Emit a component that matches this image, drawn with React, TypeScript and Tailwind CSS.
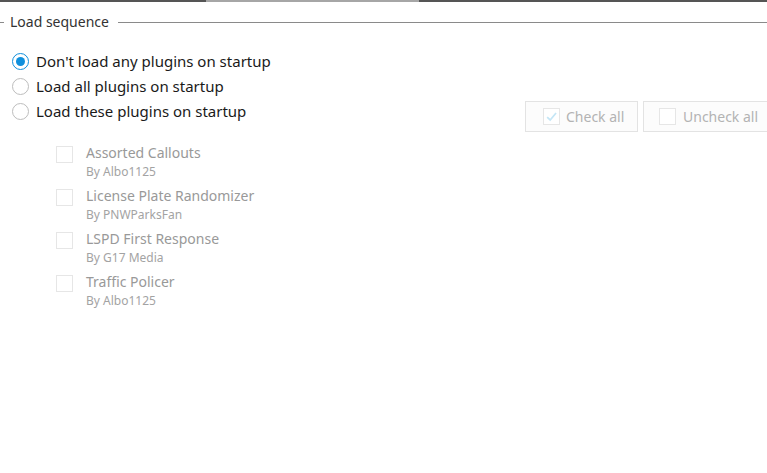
const plugins = [
  { name: 'Assorted Callouts', author: 'Albo1125' },
  { name: 'License Plate Randomizer', author: 'PNWParksFan' },
  { name: 'LSPD First Response', author: 'G17 Media' },
  { name: 'Traffic Policer', author: 'Albo1125' },
]

const options = [
  "Don't load any plugins on startup",
  'Load all plugins on startup',
  'Load these plugins on startup',
]

function Radio({ checked }: { checked: boolean }) {
  return (
    <span
      className={
        'flex h-[17px] w-[17px] shrink-0 items-center justify-center rounded-full border ' +
        (checked ? 'border-[#0f8fdc]' : 'border-[#bdbdbd]')
      }
    >
      {checked && <span className="h-[9px] w-[9px] rounded-full bg-[#0f8fdc]" />}
    </span>
  )
}

function Box({ checked }: { checked?: boolean }) {
  return (
    <span className="flex h-[17px] w-[17px] shrink-0 items-center justify-center border border-[#e6e6e6] bg-white">
      {checked && (
        <svg width="13" height="13" viewBox="0 0 12 12" fill="none">
          <path d="M2 6.5 L4.8 9.2 L10.2 2.8" stroke="#c4e6f6" strokeWidth="1.6" />
        </svg>
      )}
    </span>
  )
}

export default function App() {
  return (
    <div className="h-[473px] w-[767px] overflow-hidden bg-white font-['Noto_Sans',sans-serif]">
      <div className="flex h-[2px]">
        <div className="w-[206px] bg-[#555]" />
        <div className="w-[213px] bg-[#a6a6a6]" />
        <div className="flex-1 bg-[#555]" />
      </div>

      <div className="mt-[10px] flex items-center">
        <div className="h-px w-[4px] bg-[#8a8a8a]" />
        <span className="pl-[6px] pr-[9px] text-[14px] leading-[20px] text-[#333]">Load sequence</span>
        <div className="h-px flex-1 bg-[#8a8a8a]" />
      </div>

      <div className="relative mt-[17px] pl-[12px]">
        <div className="flex flex-col">
          {options.map((o, i) => (
            <div key={o} className="flex h-[25px] items-center gap-[7px]">
              <Radio checked={i === 0} />
              <span className="text-[15px] text-[#1a1a1a]">{o}</span>
            </div>
          ))}
        </div>

        <div className="absolute left-[525px] top-[52px] flex gap-[5px]">
          <div className="flex h-[31px] w-[113px] items-center gap-[6px] border border-[#e3e3e3] bg-[#fcfcfc] pl-[17px]">
            <Box checked />
            <span className="text-[14px] text-[#b3b3b3]">Check all</span>
          </div>
          <div className="flex h-[31px] w-[130px] items-center gap-[7px] border border-[#e3e3e3] bg-[#fcfcfc] pl-[15px]">
            <Box />
            <span className="text-[14px] text-[#b3b3b3]">Uncheck all</span>
          </div>
        </div>

        <div className="mt-[19px] flex flex-col pl-[44px]">
          {plugins.map((p) => (
            <div key={p.name} className="flex h-[43px] gap-[13px]">
              <div className="pt-[3px]">
                <Box />
              </div>
              <div className="flex flex-col">
                <span className="text-[14px] leading-[20px] text-[#999]">{p.name}</span>
                <span className="text-[12px] leading-[17px] text-[#a3a3a3]">By {p.author}</span>
              </div>
            </div>
          ))}
        </div>
      </div>
    </div>
  )
}
